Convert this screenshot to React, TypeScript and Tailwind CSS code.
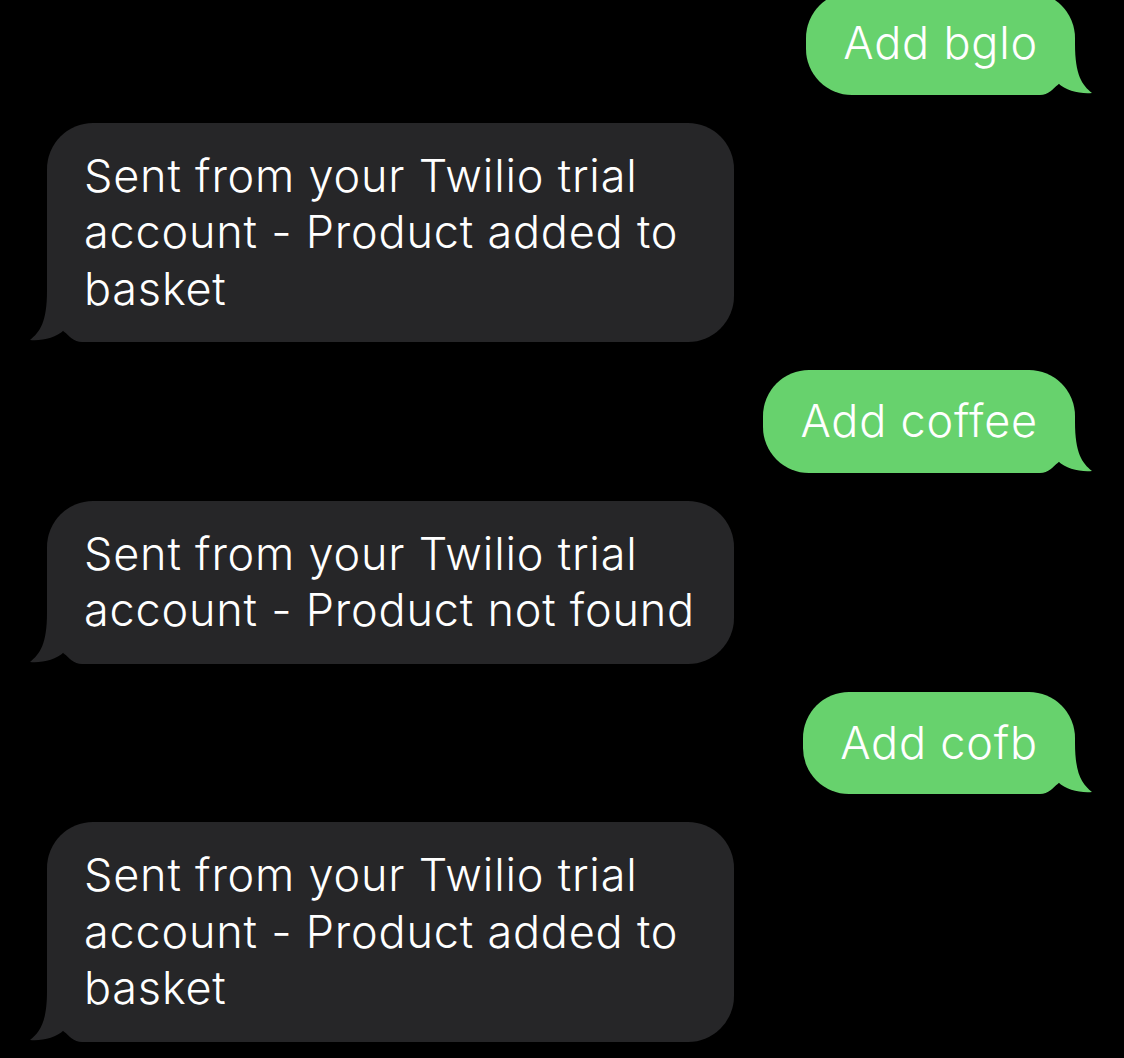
import React from 'react'

type Message = { from: 'me' | 'them'; lines: string[] }

const messages: Message[] = [
  { from: 'me', lines: ['Add bglo'] },
  { from: 'them', lines: ['Sent from your Twilio trial', 'account - Product added to', 'basket'] },
  { from: 'me', lines: ['Add coffee'] },
  { from: 'them', lines: ['Sent from your Twilio trial', 'account - Product not found'] },
  { from: 'me', lines: ['Add cofb'] },
  { from: 'them', lines: ['Sent from your Twilio trial', 'account - Product added to', 'basket'] },
]

// bubble tail, drawn for the right side; mirrored for incoming messages
function Tail({ color, left }: { color: string; left?: boolean }) {
  return (
    <svg
      className={`absolute bottom-0 h-[51px] w-[62px] ${left ? 'left-[-17px] -scale-x-100' : 'right-[-17px]'}`}
      viewBox="0 0 62 51"
      fill={color}
    >
      <path d="M0 51 L10 51 C18 51 24 45 28 39 C36 47 50 50 62 49 C52 41 45 31 45 0 L0 0 Z" />
    </svg>
  )
}

function Bubble({ msg }: { msg: Message }) {
  const me = msg.from === 'me'
  return (
    <div className={`flex ${me ? 'justify-end pr-[49px]' : 'justify-start pl-[47px]'}`}>
      <div
        className={`relative rounded-[46px] px-[37px] ${
          me ? 'bg-[#67d26d] py-[23px]' : 'w-[687px] bg-[#262628] py-[25px]'
        }`}
      >
        <Tail color={me ? '#67d26d' : '#262628'} left={!me} />
        <div className="relative">
          {msg.lines.map((l, i) => (
            <div key={i} className="whitespace-nowrap">
              {l}
            </div>
          ))}
        </div>
      </div>
    </div>
  )
}

export default function App() {
  return (
    <div
      className="min-h-[1058px] w-[1124px] overflow-hidden bg-black text-white text-[45px] leading-[56.5px] font-[350] tracking-[0.8px]"
      style={{ fontFamily: 'Inter, "Liberation Sans", sans-serif' }}
    >
      <div className="-mt-[8px] flex flex-col gap-[28px]">
        {messages.map((m, i) => (
          <Bubble key={i} msg={m} />
        ))}
      </div>
    </div>
  )
}
